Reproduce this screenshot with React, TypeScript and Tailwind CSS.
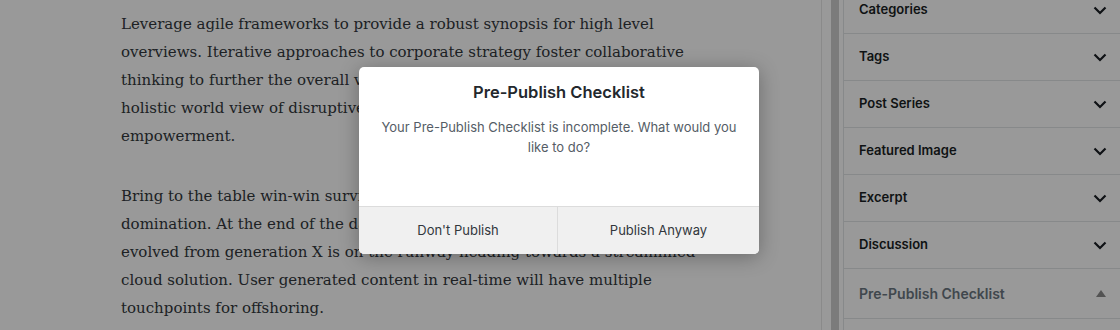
import React from "react";

const Chevron = () => (
  <svg width="14" height="9" viewBox="0 0 14 9" fill="none">
    <path d="M1.5 1.5 L7 7 L12.5 1.5" stroke="#191e23" strokeWidth="2.2" />
  </svg>
);

const Triangle = () => (
  <svg width="10" height="7" viewBox="0 0 10 7">
    <polygon points="5,0 10,7 0,7" fill="#8a8a8a" />
  </svg>
);

const rows = ["Categories", "Tags", "Post Series", "Featured Image", "Excerpt", "Discussion"];

const p1 = [
  "Leverage agile frameworks to provide a robust synopsis for high level",
  "overviews. Iterative approaches to corporate strategy foster collaborative",
  "thinking to further the overall value proposition. Organically grow the",
  "holistic world view of disruptive innovation via workplace diversity and",
  "empowerment.",
];
const p2 = [
  "Bring to the table win-win survival strategies to ensure proactive",
  "domination. At the end of the day, going forward, a new normal that has",
  "evolved from generation X is on the runway heading towards a streamlined",
  "cloud solution. User generated content in real-time will have multiple",
  "touchpoints for offshoring.",
];

export default function App() {
  return (
    <div className="relative w-[1120px] h-[330px] overflow-hidden bg-white flex">
      {/* Editor */}
      <div
        className="w-[822px] shrink-0 border-r border-[#e6e6e6] pl-[121px] pt-[10px] text-[#32373c] text-[15px] leading-[28px]"
        style={{ fontFamily: '"DejaVu Serif", serif' }}
      >
        <p className="whitespace-nowrap">
          {p1.map((l, i) => (
            <span key={i} className="block">{l}</span>
          ))}
        </p>
        <p className="mt-[32px] whitespace-nowrap">
          {p2.map((l, i) => (
            <span key={i} className="block">{l}</span>
          ))}
        </p>
      </div>
      {/* Scrollbar */}
      <div className="w-[21px] shrink-0 flex">
        <div className="w-[9px]" />
        <div className="w-[8px] bg-[#cdcdcd]" />
        <div className="w-[4px]" />
      </div>
      {/* Sidebar */}
      <div
        className="flex-1 border-l border-[#e2e4e7] flex flex-col"
        style={{ fontFamily: 'Inter, "Noto Sans", sans-serif' }}
      >
        <div className="-mt-[13px]">
          {rows.map((r) => (
            <div
              key={r}
              className="h-[47px] border-b border-[#e2e4e7] flex items-center justify-between pl-[15px] pr-[13px]"
            >
              <span className="text-[13px] font-semibold text-[#191e23]">{r}</span>
              <Chevron />
            </div>
          ))}
          <div className="h-[50px] border-b border-[#e2e4e7] flex items-center justify-between pl-[15px] pr-[14px]">
            <span className="text-[14px] font-semibold text-[#6c7781]">Pre-Publish Checklist</span>
            <Triangle />
          </div>
          <div className="pl-[16px] pt-[8px] text-[13px] text-[#191e23]">100%</div>
        </div>
      </div>

      {/* Overlay */}
      <div className="absolute inset-0 bg-black/40" />

      {/* Dialog */}
      <div
        className="absolute left-[359px] top-[67px] w-[400px] h-[187px] bg-white rounded-[5px] shadow-[0_3px_20px_rgba(0,0,0,0.3)] overflow-hidden flex flex-col"
        style={{ fontFamily: 'Inter, "Noto Sans", sans-serif' }}
      >
        <div className="h-[139px] pt-[15px] px-[14px] text-center">
          <div className="text-[16.5px] leading-[20px] font-semibold text-[#23282d]">Pre-Publish Checklist</div>
          <div className="mt-[15px] text-[13px] leading-[20px] text-[#555d66]">
            Your Pre-Publish Checklist is incomplete. What would you like to do?
          </div>
        </div>
        <div className="flex-1 flex border-t border-[#dcdcdc] bg-[#f0f0f0]">
          <div className="w-[199px] border-r border-[#dcdcdc] flex items-center justify-center text-[13px] text-[#32373c]">
            Don't Publish
          </div>
          <div className="flex-1 flex items-center justify-center text-[13px] text-[#32373c]">
            Publish Anyway
          </div>
        </div>
      </div>
    </div>
  );
}
